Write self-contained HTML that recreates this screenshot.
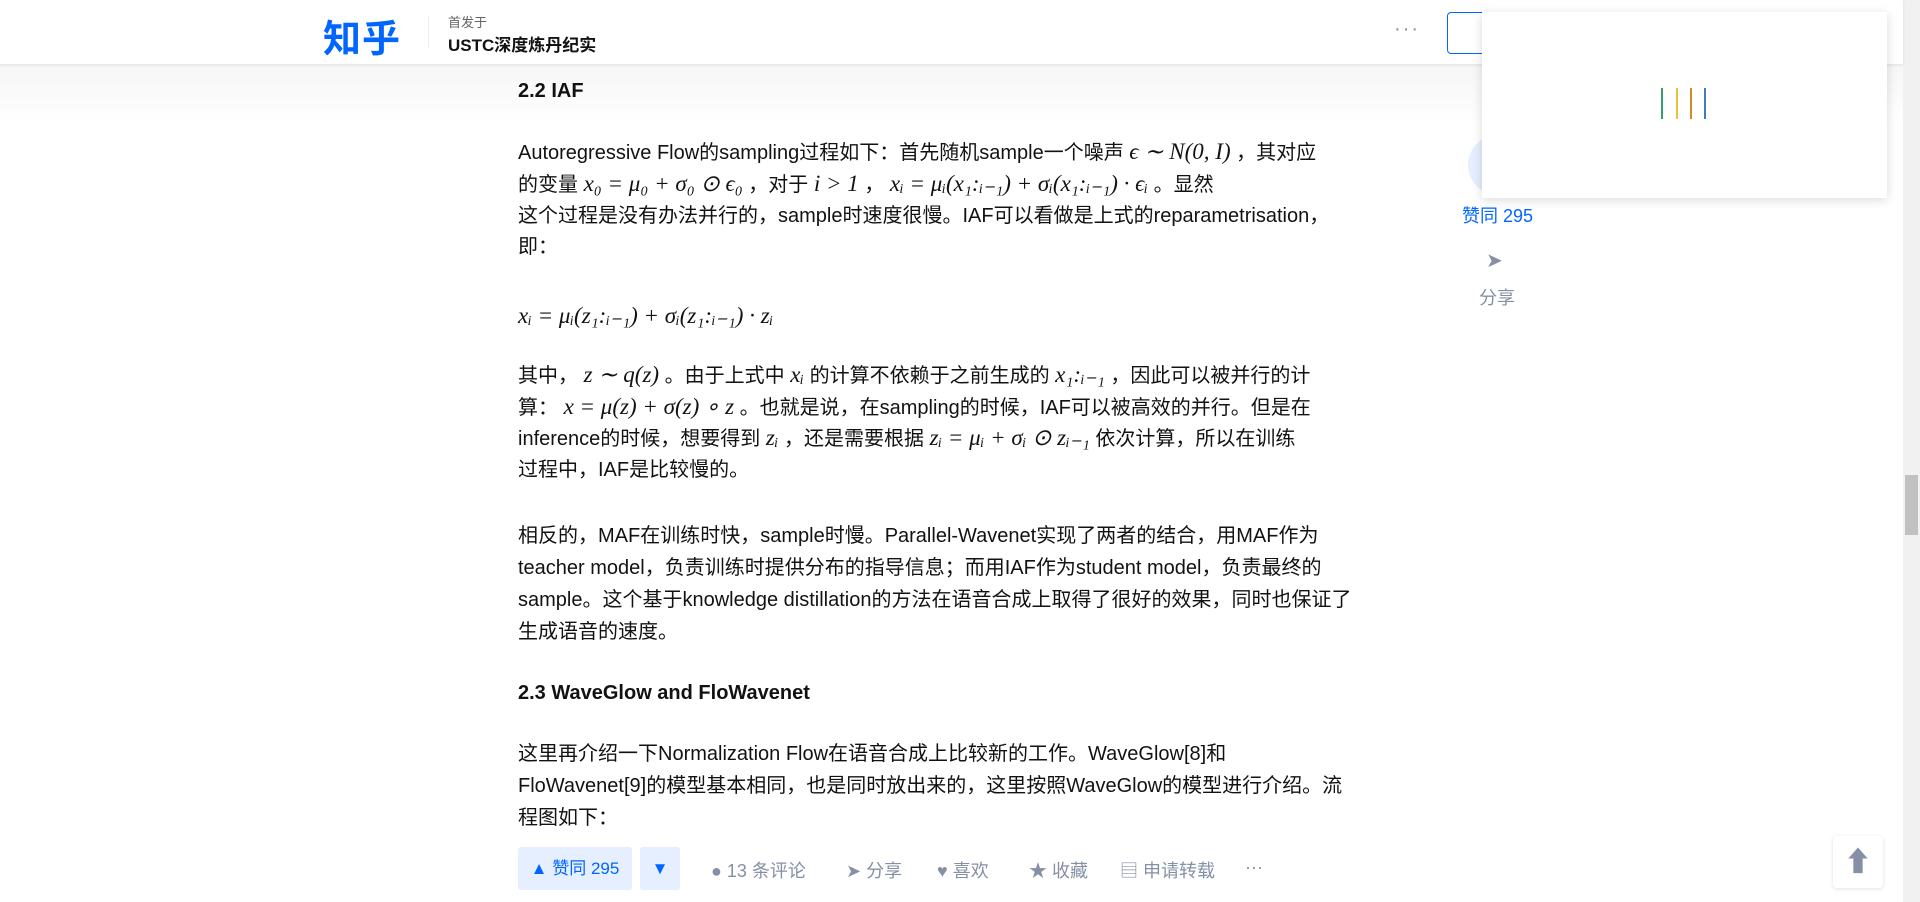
<!DOCTYPE html>
<html><head><meta charset="utf-8"><style>
*{margin:0;padding:0;box-sizing:border-box}
body{width:1920px;height:902px;overflow:hidden;background:#fff;font-family:"Liberation Sans","Noto Sans CJK SC",sans-serif;color:#121212;position:relative}
.hdr{position:absolute;left:0;top:0;width:1903px;height:64px;background:#fff;box-shadow:0 1px 3px rgba(18,18,18,.1);z-index:5}
.shade{position:absolute;left:0;top:64px;width:1903px;height:60px;background:linear-gradient(#f0f0f0,#fff);opacity:.6}
.logo{position:absolute;left:323px;top:8px;font-size:38px;font-weight:bold;color:#0066ff;letter-spacing:1px}
.div{position:absolute;left:428px;top:16px;width:1px;height:32px;background:#ebebeb}
.sub1{position:absolute;left:448px;top:12px;font-size:13px;color:#646464}
.sub2{position:absolute;left:448px;top:31px;font-size:17px;font-weight:bold}
.dots{position:absolute;left:1394px;top:18px;font-size:20px;color:#8590a6;letter-spacing:2px}
.wbtn{position:absolute;left:1447px;top:12px;width:128px;height:42px;border:1px solid #0066ff;border-radius:4px}
.p{position:absolute;left:518px;font-size:20px;line-height:32px;white-space:nowrap}
.h{font-weight:bold}
.m{font-family:"Liberation Serif",serif;font-style:italic;font-size:23px}
.popup{position:absolute;left:1482px;top:12px;width:405px;height:186px;background:#fff;box-shadow:0 2px 10px rgba(0,0,0,.15);z-index:6}
.bar{position:absolute;top:76px;width:2px;height:31px}
.side{position:absolute;color:#0066ff;font-size:18px}
.sb{position:absolute;right:0;top:0;width:17px;height:902px;background:#f1f1f1}
.thumb{position:absolute;right:2px;top:475px;width:13px;height:60px;background:#c1c1c1}
.btn{position:absolute;top:847px;height:43px;background:#e5efff;color:#0066ff;border-radius:3px;font-size:17px;line-height:43px;text-align:center}
.act{position:absolute;top:857px;font-size:18px;color:#8590a6}
</style></head><body>
<div class="shade"></div>
<div class="hdr">
<div class="logo">知乎</div><div class="div"></div>
<div class="sub1">首发于</div><div class="sub2">USTC深度炼丹纪实</div>
<div class="dots">···</div><div class="wbtn"></div>
</div>
<div class="p h" style="top:75px">2.2 IAF</div>
<div class="p" style="top:136px">Autoregressive Flow的sampling过程如下：首先随机sample一个噪声 <span class="m">ϵ ∼ N(0, I)</span> ，其对应</div>
<div class="p" style="top:168px">的变量 <span class="m">x₀ = μ₀ + σ₀ ⊙ ϵ₀</span> ，对于 <span class="m">i &gt; 1</span> ， <span class="m">xᵢ = μᵢ(x₁:ᵢ₋₁) + σᵢ(x₁:ᵢ₋₁) · ϵᵢ</span> 。显然</div>
<div class="p" style="top:200px">这个过程是没有办法并行的，sample时速度很慢。IAF可以看做是上式的reparametrisation，</div>
<div class="p" style="top:231px">即：</div>
<div class="p" style="top:300px"><span class="m">xᵢ = μᵢ(z₁:ᵢ₋₁) + σᵢ(z₁:ᵢ₋₁) · zᵢ</span></div>
<div class="p" style="top:359px">其中， <span class="m">z ∼ q(z)</span> 。由于上式中 <span class="m">xᵢ</span> 的计算不依赖于之前生成的 <span class="m">x₁:ᵢ₋₁</span> ，因此可以被并行的计</div>
<div class="p" style="top:391px">算： <span class="m">x = μ(z) + σ(z) ∘ z</span> 。也就是说，在sampling的时候，IAF可以被高效的并行。但是在</div>
<div class="p" style="top:422px">inference的时候，想要得到 <span class="m">zᵢ</span> ，还是需要根据 <span class="m">zᵢ = μᵢ + σᵢ ⊙ zᵢ₋₁</span> 依次计算，所以在训练</div>
<div class="p" style="top:454px">过程中，IAF是比较慢的。</div>
<div class="p" style="top:520px">相反的，MAF在训练时快，sample时慢。Parallel-Wavenet实现了两者的结合，用MAF作为</div>
<div class="p" style="top:552px">teacher model，负责训练时提供分布的指导信息；而用IAF作为student model，负责最终的</div>
<div class="p" style="top:584px">sample。这个基于knowledge distillation的方法在语音合成上取得了很好的效果，同时也保证了</div>
<div class="p" style="top:616px">生成语音的速度。</div>
<div class="p h" style="top:677px">2.3 WaveGlow and FloWavenet</div>
<div class="p" style="top:738px">这里再介绍一下Normalization Flow在语音合成上比较新的工作。WaveGlow[8]和</div>
<div class="p" style="top:770px">FloWavenet[9]的模型基本相同，也是同时放出来的，这里按照WaveGlow的模型进行介绍。流</div>
<div class="p" style="top:802px">程图如下：</div>
<div style="position:absolute;left:1468px;top:135px;width:60px;height:60px;border-radius:50%;background:#e5efff"></div>
<div class="side" style="left:1462px;top:202px">赞同 295</div>
<div style="position:absolute;left:1486px;top:248px;color:#8590a6;font-size:20px">➤</div>
<div class="side" style="left:1479px;top:284px;color:#8590a6">分享</div>
<div class="popup">
<div class="bar" style="left:179px;background:#3a9e6a"></div>
<div class="bar" style="left:194px;background:#e8c23a"></div>
<div class="bar" style="left:208px;background:#d08a2a"></div>
<div class="bar" style="left:222px;background:#3a7ec0"></div>
</div>
<div class="btn" style="left:518px;width:114px">▲ 赞同 295</div>
<div class="btn" style="left:640px;width:40px">▼</div>
<div class="act" style="left:711px">● 13 条评论</div>
<div class="act" style="left:846px">➤ 分享</div>
<div class="act" style="left:937px">♥ 喜欢</div>
<div class="act" style="left:1029px">★ 收藏</div>
<div class="act" style="left:1120px">▤ 申请转载</div>
<div class="act" style="left:1245px">···</div>
<div style="position:absolute;left:1833px;top:836px;width:50px;height:52px;background:#fff;border-radius:4px;box-shadow:0 1px 4px rgba(0,0,0,.12);color:#8590a6;font-size:28px;text-align:center;line-height:52px;font-weight:bold">⬆</div>
<div class="sb"><div class="thumb"></div></div>
</body></html>
